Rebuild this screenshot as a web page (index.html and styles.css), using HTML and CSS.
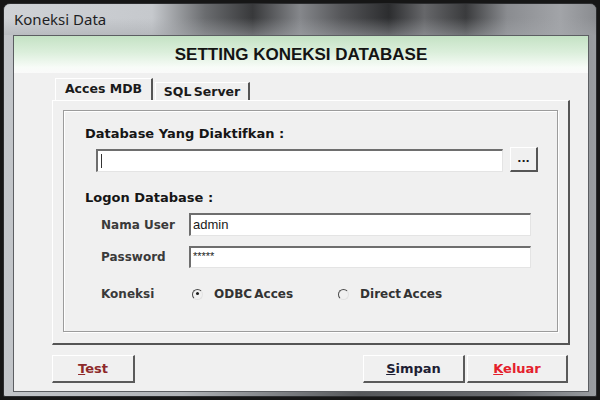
FILE: index.html
```html
<!DOCTYPE html>
<html lang="id">
<head>
    <meta charset="UTF-8">
    <title>Koneksi Data</title>
    <link rel="stylesheet" href="styles.css">
</head>
<body>
    <div class="window">
        <div class="titlebar">
            <span class="title-text">Koneksi Data</span>
        </div>
        <div class="client">
            <div class="header">SETTING KONEKSI DATABASE</div>
            <div class="content">
                <div class="tabs">
                    <div class="tab active">Acces MDB</div>
                    <div class="tab">SQL Server</div>
                </div>
                <div class="panel">
                    <div class="group">
                        <div class="section-label">Database Yang Diaktifkan :</div>
                        <div class="db-row">
                            <div class="input wide"><span class="caret"></span></div>
                            <div class="browse">...</div>
                        </div>
                        <div class="section-label logon">Logon Database :</div>
                        <div class="field-row">
                            <span class="field-label">Nama User</span>
                            <div class="input field">admin</div>
                        </div>
                        <div class="field-row second">
                            <span class="field-label">Password</span>
                            <div class="input field pass">*****</div>
                        </div>
                        <div class="field-row koneksi">
                            <span class="field-label">Koneksi</span>
                            <span class="radio checked"></span>
                            <span class="radio-text">ODBC Acces</span>
                            <span class="radio second-radio"></span>
                            <span class="radio-text">Direct Acces</span>
                        </div>
                    </div>
                </div>
                <div class="buttons">
                    <div class="btn btn-test"><u>T</u>est</div>
                    <div class="spacer"></div>
                    <div class="btn btn-save"><u>S</u>impan</div>
                    <div class="btn btn-exit"><u>K</u>eluar</div>
                </div>
            </div>
        </div>
    </div>
</body>
</html>
```

FILE: styles.css
```css
body {
    margin: 0;
    background-color: #161616;
    font-family: "DejaVu Sans", Verdana, sans-serif;
    color: #1a1a1a;
}

/* bingkai jendela ala Aero */
.window {
    margin: 3px;
    width: 594px;
    height: 394px;
    box-sizing: border-box;
    border: 1px solid #2c2d2f;
    border-radius: 7px 7px 2px 2px;
    overflow: hidden;
    display: flex;
    flex-direction: column;
    background-color: #8a8d91;
    background-image: linear-gradient(90deg, #c2c5c9 0%, #b0b3b7 30%, #55575a 60%, #6a6c70 85%, #9a9da1 100%);
}

.titlebar {
    display: flex;
    height: 31px;
    background-color: #5c5e61;
    background-image: linear-gradient(90deg, #cfd2d6 0%, #c6c9cd 25%, #6a6c6f 34%, #38393b 42%, #85878b 50%, #555659 57%, #2c2d2f 65%, #66676a 71%, #3a3b3d 78%, #8a8c90 85%, #a2a4a8 94%, #8a8c90 100%);
}

.title-text {
    flex: 1;
    line-height: 30px;
    padding-left: 10px;
    font-family: "Noto Sans", sans-serif;
    font-size: 15px;
    color: #1e1e24;
    background: linear-gradient(180deg, rgba(165, 168, 172, 0) 45%, rgba(165, 168, 172, 0.5) 100%);
}

.client {
    flex: 1;
    margin: 0 7px 4px 9px;
    border: 1px solid #5c5e62;
    background-color: #f0f0f0;
    display: flex;
    flex-direction: column;
}

.header {
    height: 37px;
    line-height: 37px;
    text-align: center;
    font-family: "Liberation Sans", Arial, sans-serif;
    font-weight: bold;
    font-size: 17px;
    color: #141414;
    background: linear-gradient(180deg, #c4e2c4 0%, #dcefdc 45%, #f8fcf8 85%, #fafafa 100%);
}

.content {
    padding-left: 38px;
}

.tabs {
    display: flex;
    align-items: flex-end;
    height: 22px;
    margin-top: 5px;
    padding-left: 3px;
}

.tab {
    box-sizing: border-box;
    height: 18px;
    width: 95px;
    margin-left: 2px;
    font-weight: bold;
    font-size: 12.5px;
    line-height: 17px;
    text-align: center;
    word-spacing: -2px;
    border-top: 1px solid #ffffff;
    border-left: 1px solid #ffffff;
    border-right: 2px solid #555555;
}

.tab.active {
    width: 98px;
    height: 22px;
    margin-left: 0;
    line-height: 20px;
    word-spacing: 0;
}

.panel {
    box-sizing: border-box;
    width: 518px;
    height: 245px;
    padding: 9px 10px 0 10px;
    border-top: 1px solid #ffffff;
    border-left: 1px solid #ffffff;
    border-right: 2px solid #555555;
    border-bottom: 2px solid #555555;
}

.group {
    box-sizing: border-box;
    width: 495px;
    height: 222px;
    border: 1px solid #9c9c9c;
    box-shadow: inset 1px 1px #ffffff, 1px 1px #ffffff;
    padding: 15px 0 0 21px;
}

.section-label {
    font-weight: bold;
    font-size: 13px;
    line-height: 16px;
    color: #161616;
}

.section-label.logon {
    margin-top: 18px;
}

.db-row {
    display: flex;
    align-items: flex-end;
    gap: 7px;
    margin: 5px 0 0 11px;
}

.input {
    box-sizing: border-box;
    height: 23px;
    background-color: #ffffff;
    border-top: 2px solid #6e6e6e;
    border-left: 2px solid #6e6e6e;
    border-right: 1px solid #e4e4e4;
    border-bottom: 1px solid #e4e4e4;
    font-family: "Liberation Sans", Arial, sans-serif;
    font-size: 13px;
    line-height: 20px;
    padding-left: 2px;
}

.input.wide {
    width: 407px;
}

.caret {
    display: inline-block;
    width: 1px;
    height: 14px;
    margin: 3px 0 0 1px;
    background-color: #333333;
    vertical-align: top;
}

.browse {
    box-sizing: border-box;
    width: 28px;
    height: 25px;
    text-align: center;
    font-weight: bold;
    font-size: 11px;
    line-height: 22px;
    border-top: 1px solid #ffffff;
    border-left: 1px solid #ffffff;
    border-right: 2px solid #555555;
    border-bottom: 2px solid #555555;
}

.field-row {
    display: flex;
    align-items: center;
    margin: 7px 0 0 16px;
}

.field-row.second {
    margin-top: 10px;
}

.field-row.koneksi {
    margin-top: 16px;
    height: 20px;
}

.field-label {
    width: 88px;
    font-weight: bold;
    font-size: 12px;
    color: #3a3a3a;
}

.input.field {
    width: 342px;
}

.input.pass {
    height: 22px;
    font-size: 11px;
    line-height: 16px;
}

.radio {
    box-sizing: border-box;
    width: 11px;
    height: 11px;
    margin-left: 3px;
    border-radius: 50%;
    border: 1.5px solid;
    border-color: #4a4a4a #e2e2e2 #e2e2e2 #4a4a4a;
    position: relative;
}

.radio.checked::after {
    content: "";
    position: absolute;
    left: 2.5px;
    top: 2.5px;
    width: 3px;
    height: 3px;
    border-radius: 50%;
    background-color: #1a1a1a;
}

.radio.second-radio {
    margin-left: 45px;
}

.radio-text {
    margin-left: 11px;
    font-weight: bold;
    font-size: 12px;
    word-spacing: -2px;
    color: #333333;
}

.buttons {
    display: flex;
    gap: 2px;
    width: 516px;
    margin-top: 10px;
}

.spacer {
    flex: 1;
}

.btn {
    box-sizing: border-box;
    height: 28px;
    width: 101px;
    text-align: center;
    font-weight: bold;
    font-size: 13px;
    line-height: 26px;
    border-top: 1px solid #ffffff;
    border-left: 1px solid #ffffff;
    border-right: 2px solid #5a5a5a;
    border-bottom: 2px solid #5a5a5a;
}

.btn-test {
    width: 83px;
    color: #8e2a2a;
}

.btn-save {
    width: 102px;
    color: #1e1e34;
}

.btn-exit {
    color: #e4202c;
}
```
